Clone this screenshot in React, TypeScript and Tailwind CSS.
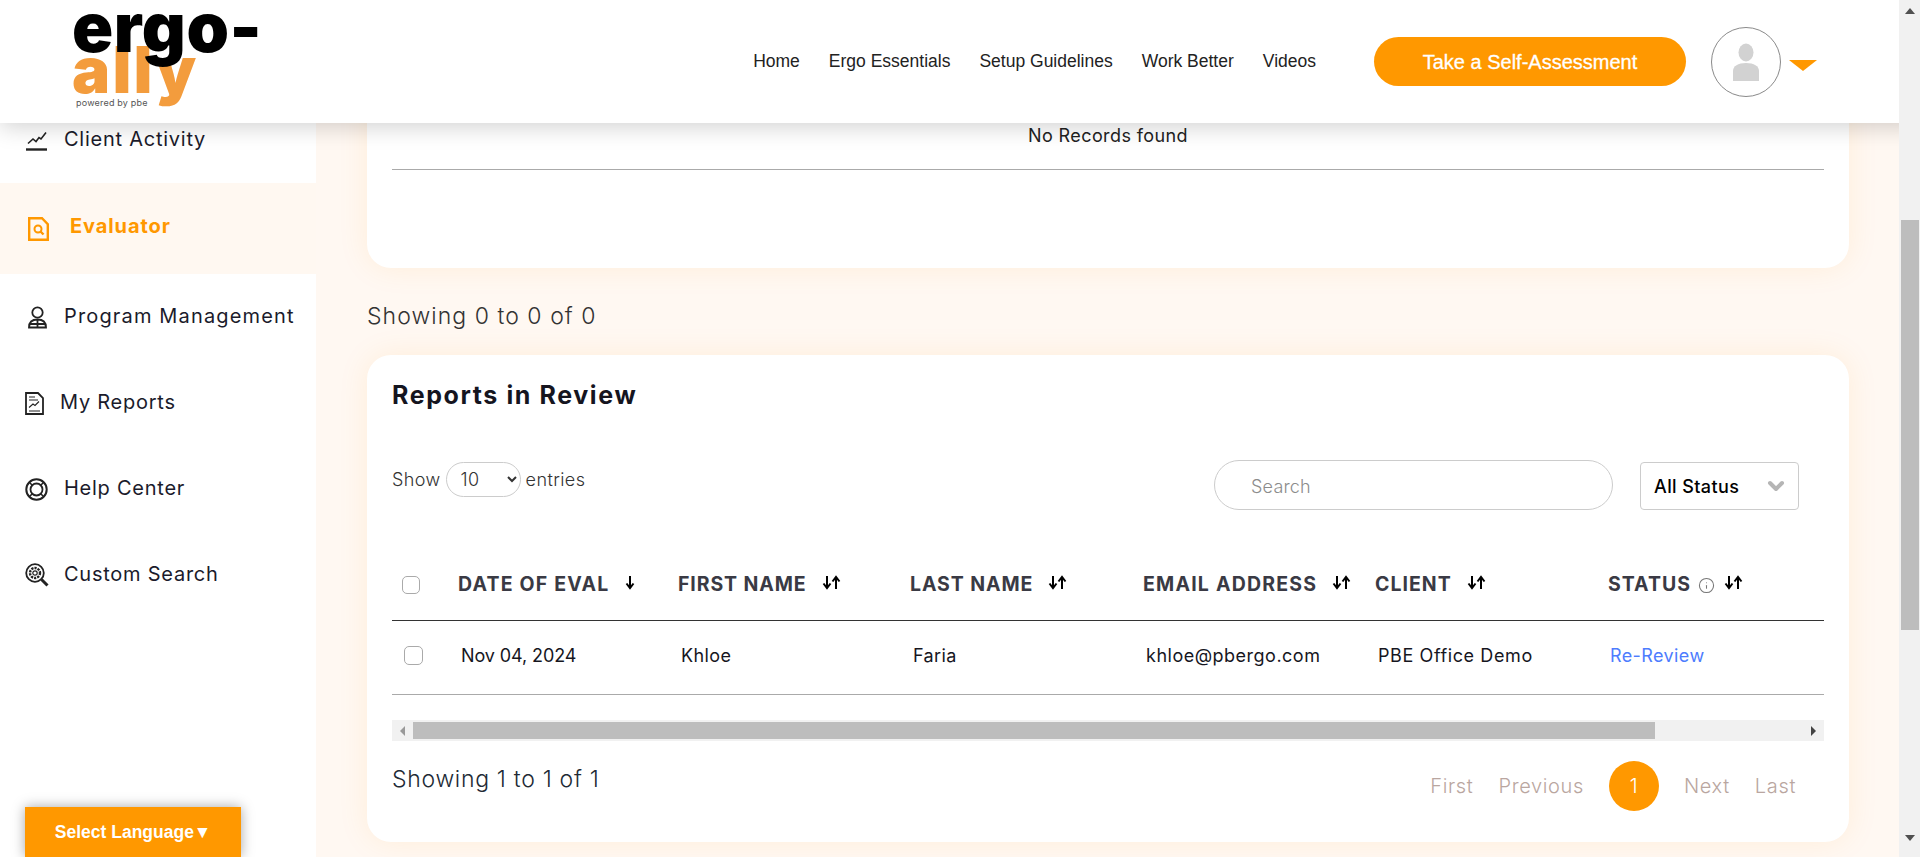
import type { ReactNode } from 'react';
import { ChevronDown, Info } from 'lucide-react';

const SortIcon = ({ single = false }: { single?: boolean }) => (
  <svg width={single ? 10 : 20} height="15" viewBox={single ? '0 0 10 15' : '0 0 20 15'} className="shrink-0 text-black">
    <path d="M5 1v11M1.5 8.5 5 13l3.500-4.500" fill="none" stroke="currentColor" strokeWidth="2" />
    {!single && <path d="M14 14V3M10.500 6.500 14 2l3.500 4.500" fill="none" stroke="currentColor" strokeWidth="2" />}
  </svg>
);

const ActivityIcon = () => (
  <svg width="22" height="21" viewBox="0 0 22 21" fill="none" stroke="#222" strokeWidth="1.6">
    <path d="M2 13.500 7 9l3 2.500 3-4 2 1.500 5-6.500" />
    <path d="M0 19.500h21" strokeWidth="2.400" />
  </svg>
);

const EvaluatorIcon = () => (
  <svg width="21" height="24" viewBox="0 0 21 24" fill="none" stroke="#ff9800" strokeWidth="2.400" className="ml-[3px]">
    <path d="M1.200 1.200h12.800l5.800 6v15.600H1.200z" />
    <circle cx="10" cy="12" r="3.500" strokeWidth="2" />
    <path d="m12.500 14.500 3 3" />
  </svg>
);

const ProgramIcon = () => (
  <svg width="19" height="23" viewBox="0 0 19 23" fill="none" stroke="#222" strokeWidth="1.800">
    <circle cx="9.500" cy="6.500" r="5.200" />
    <path d="M1 21.500c0-6 3.500-8 8.500-8s8.500 2 8.500 8zM9.500 13.500v8M1 18h17" />
  </svg>
);

const ReportIcon = () => (
  <svg width="19" height="23" viewBox="0 0 19 23" fill="none" stroke="#222" className="-ml-[5px]">
    <path d="M1 1h12l5 5v16H1z" strokeWidth="1.800" />
    <path d="M4 5h6M4 8h9M4 19h11M4 15.500 8 12l2 1.500 4-4" strokeWidth="1.100" />
  </svg>
);

const HelpIcon = () => (
  <svg width="23" height="23" viewBox="0 0 23 23" fill="none" stroke="#222" className="-ml-[1px]">
    <circle cx="11.500" cy="11.500" r="10.200" strokeWidth="2" />
    <circle cx="11.500" cy="11.500" r="6" strokeWidth="1.800" />
    <path d="m4.500 4.500 2.800 2.800M18.500 4.500l-2.800 2.800M4.500 18.500l2.800-2.800M18.500 18.500l-2.800-2.800" strokeWidth="1.600" />
  </svg>
);

const CustomSearchIcon = () => (
  <svg width="24" height="24" viewBox="0 0 24 24" fill="none" stroke="#222">
    <circle cx="10" cy="10" r="8.800" strokeWidth="1.800" />
    <circle cx="10" cy="10" r="5" strokeWidth="2.400" strokeDasharray="2.200 1" />
    <circle cx="10" cy="10" r="2.200" strokeWidth="1.200" />
    <path d="m16.500 16.500 6 6" strokeWidth="3" />
  </svg>
);

const SideItem = ({
  icon,
  label,
  gap,
  tracking = 'tracking-[0.75px]',
  active = false,
}: {
  icon: ReactNode;
  label: string;
  gap: string;
  tracking?: string;
  active?: boolean;
}) => (
  <div
    className={`flex items-center pl-[25px] ${gap} ${tracking} ${
      active ? 'h-[91px] bg-[#fff8f1] text-[20px] font-bold text-[#ff9800]' : 'h-[86px] text-[20px] text-[#1b1b2b]'
    }`}
  >
    <span className="flex w-[24px] shrink-0 justify-center">{icon}</span>
    <span className={active ? '-mt-[6px]' : '-mt-[2px]'}>{label}</span>
  </div>
);

const columns = [
  { label: 'DATE OF EVAL', value: 'Nov 04, 2024', single: true, head: 'tracking-[1.200px]', tracking: 'tracking-[-0.1px]' },
  { label: 'FIRST NAME', value: 'Khloe', head: 'tracking-[0.9px]', tracking: 'tracking-[0.4px]' },
  { label: 'LAST NAME', value: 'Faria', head: 'tracking-[0.9px]', tracking: 'tracking-[0.4px]' },
  { label: 'EMAIL ADDRESS', value: 'khloe@pbergo.com', head: 'tracking-[1.200px]', tracking: 'tracking-[0.5px]' },
  { label: 'CLIENT', value: 'PBE Office Demo', head: 'tracking-[1px]', tracking: 'tracking-[0.6px]' },
];

const gridCols = 'grid grid-cols-[66px_220px_232px_233px_232px_233px_1fr]';

function Header() {
  return (
    <header className="absolute inset-x-0 top-0 z-20 flex h-[123px] items-center bg-white pl-[72px] pr-[103px] shadow-[0_4px_22px_rgba(0,0,0,0.18)]">
      {/* logo */}
      <div className="relative h-[123px] w-[190px] shrink-0 select-none">
        <span className="absolute left-0 top-[38px] text-[64px] font-black leading-[64px] tracking-[2.200px] text-[#f39c3d]">
          ally
        </span>
        <span className="absolute left-0 top-0 text-[68px] font-black leading-[54px] tracking-[0.6px] text-black">
          ergo-
        </span>
        <span className="absolute left-[4px] top-[97px] text-[9px] leading-[12px] tracking-[0.2px] text-[#555]">
          powered by pbe
        </span>
      </div>
      <nav className="ml-auto flex items-center gap-[29px] pb-[1px] text-[17.500px] text-[#222] [font-family:'Liberation_Sans',Arial,sans-serif]">
        <span>Home</span>
        <span>Ergo Essentials</span>
        <span>Setup Guidelines</span>
        <span>Work Better</span>
        <span>Videos</span>
      </nav>
      <button className="ml-[58px] flex h-[49px] w-[312px] items-center justify-center rounded-full bg-[#ff9800] text-[20px] text-white [-webkit-text-stroke:0.3px_white] [font-family:'Liberation_Sans',Arial,sans-serif]">
        Take a Self-Assessment
      </button>
      <div className="ml-[25px] flex h-[70px] w-[70px] items-center justify-center rounded-full border border-[#8a8a8a]">
        <svg width="26" height="38" viewBox="0 0 26 38" fill="#d2d2d2">
          <ellipse cx="13" cy="9.500" rx="7.500" ry="9" />
          <path d="M0 38V28c0-5 5-8 13-8s13 3 13 8v10z" />
        </svg>
      </div>
      <div className="ml-[8px] mt-[8px] h-0 w-0 border-x-[14px] border-t-[11px] border-x-transparent border-t-[#ff9800]" />
    </header>
  );
}

function Sidebar() {
  return (
    <aside className="relative flex w-[316px] shrink-0 flex-col bg-white pt-[97px]">
      <SideItem icon={<ActivityIcon />} label="Client Activity" gap="gap-[15px]" />
      <SideItem icon={<EvaluatorIcon />} label="Evaluator" gap="gap-[21px]" tracking="tracking-[0.9px]" active />
      <SideItem icon={<ProgramIcon />} label="Program Management" gap="gap-[15px]" tracking="tracking-[1.150px]" />
      <SideItem icon={<ReportIcon />} label="My Reports" gap="gap-[11px]" />
      <SideItem icon={<HelpIcon />} label="Help Center" gap="gap-[15px]" />
      <SideItem icon={<CustomSearchIcon />} label="Custom Search" gap="gap-[15px]" />
      <div className="absolute bottom-0 left-[25px] flex h-[50px] w-[216px] items-center justify-center bg-[#ff9800] pt-[1px] text-[17.500px] font-bold text-white shadow-[0_0_12px_rgba(0,0,0,0.35)] [font-family:'Liberation_Sans',Arial,sans-serif]">
        Select Language▼
      </div>
    </aside>
  );
}

function ReportsCard() {
  return (
    <section className="h-[487px] rounded-[24px] bg-white px-[25px] pt-[25px] shadow-[0_0_30px_rgba(255,152,0,0.1)]">
      <h2 className="text-[25px] font-bold leading-[30px] tracking-[1.600px] text-[#15151f]">Reports in Review</h2>

      <div className="mt-[50px] flex h-[50px] items-start justify-between pr-[25px]">
        <div className="flex items-center pt-[2px] text-[18px] font-light tracking-[0.4px] text-[#333]">
          <span>Show</span>
          <select className="ml-[5px] h-[35px] w-[75px] rounded-full border border-[#ccc] bg-white pl-[10px] text-[18px] text-[#333]">
            <option>10</option>
          </select>
          <span className="ml-[5px]">entries</span>
        </div>
        <div className="flex items-start gap-[27px]">
          <input
            placeholder="Search"
            className="h-[50px] w-[399px] rounded-full border border-[#ccc] bg-white pl-[36px] pt-[3px] text-[18px] font-light tracking-[0.2px] outline-none placeholder:text-[#8c8c8c]"
          />
          <div className="mt-[2px] flex h-[48px] w-[159px] items-center justify-between rounded-[4px] border border-[#ccc] pl-[13px] pr-[10px] text-[18px] font-medium tracking-[0.4px] text-black">
            <span>All Status</span>
            <ChevronDown size={24} strokeWidth={4} color="#b5b5b5" />
          </div>
        </div>
      </div>

      {/* table head */}
      <div className={`${gridCols} mt-[40px] h-[71px] items-center border-b border-[#333]`}>
        <div className="pl-[10px]">
          <div className="h-[18px] w-[18px] rounded-[5px] border border-[#aaa] bg-white" />
        </div>
        {columns.map((col) => (
          <div key={col.label} className={`flex items-center gap-[15px] text-[19.500px] font-bold leading-none text-[#3a3a44] ${col.head}`}>
            <span>{col.label}</span>
            <span className="-mt-[6px]">
              <SortIcon single={col.single} />
            </span>
          </div>
        ))}
        <div className="flex items-center text-[19.500px] font-bold leading-none tracking-[1px] text-[#3a3a44]">
          <span>STATUS</span>
          <Info size={17} strokeWidth={1.500} color="#777" className="ml-[7px]" />
          <span className="-mt-[6px] ml-[9px]">
            <SortIcon />
          </span>
        </div>
      </div>

      {/* table row */}
      <div className={`${gridCols} h-[74px] items-center border-b border-[#aaa] pb-[4px] text-[18px] text-[#16161e]`}>
        <div className="pl-[12px]">
          <div className="h-[19px] w-[19px] rounded-[5px] border border-[#aaa] bg-white" />
        </div>
        {columns.map((col) => (
          <div key={col.label} className={`pl-[3px] ${col.tracking}`}>
            {col.value}
          </div>
        ))}
        <div className="pl-[2px] tracking-[0.4px] text-[#4d7cfe]">Re-Review</div>
      </div>

      {/* table scrollbar */}
      <div className="mt-[25px] flex h-[21px] items-center bg-[#f1f1f1] pr-[8px]">
        <div className="ml-[8px] h-0 w-0 border-y-[5px] border-r-[5px] border-y-transparent border-r-[#999]" />
        <div className="ml-[8px] h-[17px] w-[1242px] bg-[#bdbdbd]" />
        <div className="ml-auto h-0 w-0 border-y-[5px] border-l-[5px] border-y-transparent border-l-[#444]" />
      </div>

      <div className="mt-[20px] flex items-start justify-between pr-[28px]">
        <p className="pt-[5px] text-[23px] font-light leading-[26px] tracking-[0.7px] text-[#222a35]">Showing 1 to 1 of 1</p>
        <div className="flex items-center gap-[25px] text-[20px] font-light tracking-[0.65px] text-[#b9a6a0]">
          <span>First</span>
          <span>Previous</span>
          <span className="flex h-[50px] w-[50px] items-center justify-center rounded-full bg-[#ff9800] text-white">1</span>
          <span>Next</span>
          <span>Last</span>
        </div>
      </div>
    </section>
  );
}

export default function App() {
  return (
    <div className="relative flex h-[857px] w-[1920px] overflow-hidden bg-white [font-family:Inter,sans-serif]">
      <Header />
      <Sidebar />
      <main className="flex min-w-0 flex-1 flex-col bg-[#fff8f2] pl-[51px] pr-[50px]">
        <section className="h-[268px] shrink-0 rounded-b-[24px] bg-white px-[25px] pt-[124px] shadow-[0_0_30px_rgba(255,152,0,0.1)]">
          <p className="h-[45px] text-center text-[18px] leading-[24px] tracking-[0.4px] text-[#222]">No Records found</p>
          <div className="border-b border-[#aaa]" />
        </section>
        <p className="mt-[34px] h-[53px] text-[23px] font-light leading-[28px] tracking-[1.050px] text-[#333]">Showing 0 to 0 of 0</p>
        <ReportsCard />
      </main>
      {/* page scrollbar */}
      <div className="z-30 flex w-[21px] shrink-0 flex-col items-center bg-[#f1f1f1] pt-[8px]">
        <div className="h-0 w-0 border-x-[5px] border-b-[6px] border-x-transparent border-b-[#505050]" />
        <div className="mt-[206px] h-[410px] w-[18px] bg-[#bdbdbd]" />
        <div className="mt-[205px] h-0 w-0 border-x-[5px] border-t-[6px] border-x-transparent border-t-[#505050]" />
      </div>
    </div>
  );
}
